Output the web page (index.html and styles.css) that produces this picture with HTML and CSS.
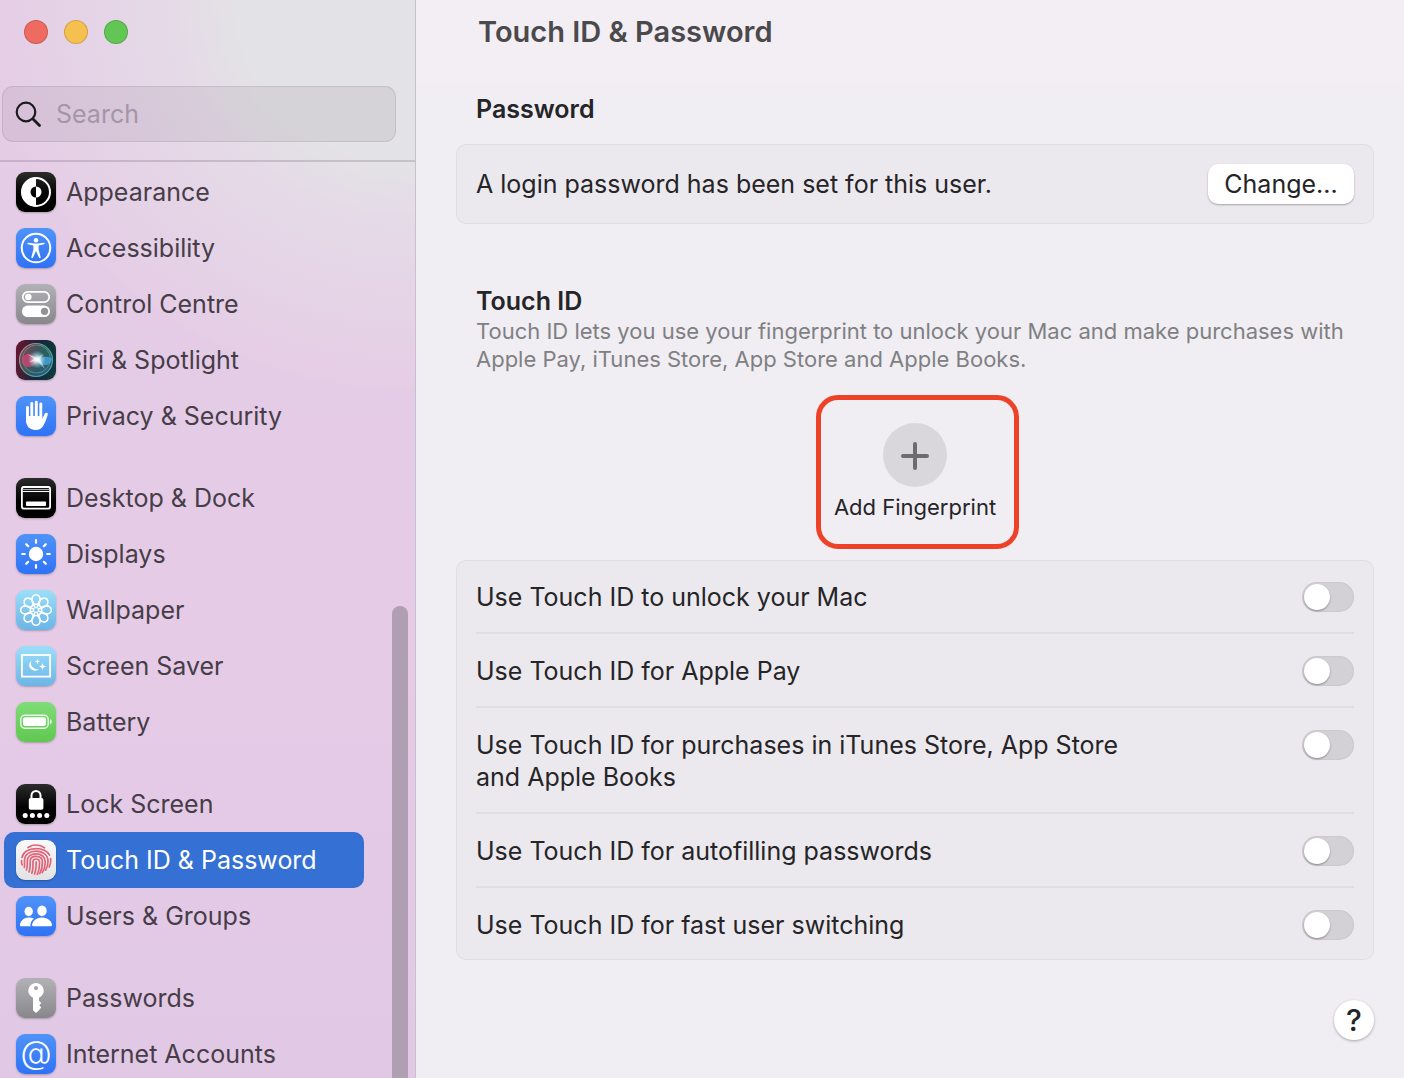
FILE: index.html
```
<!DOCTYPE html>
<html lang="en">
<head>
    <meta charset="UTF-8">
    <meta name="viewport" content="width=device-width, initial-scale=1.0">
    <title>Touch ID &amp; Password</title>
    <link rel="stylesheet" href="styles.css">
</head>
<body>
    <aside class="sidebar">
        <div class="sidebar-top">
            <div class="window-controls">
                <button class="dot red" aria-label="Close"></button>
                <button class="dot yellow" aria-label="Minimise"></button>
                <button class="dot green" aria-label="Zoom"></button>
            </div>
            <label class="search">
                <svg viewBox="0 0 28 28" width="28" height="28" fill="none" stroke="#1d1a1e" stroke-linecap="round">
                    <circle cx="12" cy="12" r="9.300" stroke-width="2.200"/>
                    <path d="M19 19l6.500 6.500" stroke-width="2.800"/>
                </svg>
                <input type="search" placeholder="Search" aria-label="Search">
            </label>
        </div>
        <nav class="list">
            <ul>
                <li><a href="#">
                    <svg class="icon black" viewBox="0 0 40 40">
                        <circle cx="20" cy="20" r="14" fill="none" stroke="#fff" stroke-width="2"/>
                        <path fill="#fff" d="M20 5.500v9a5.500 5.500 0 0 0 0 11v9a14.500 14.500 0 0 1 0-29z"/>
                        <path fill="#fff" d="M20 14.500a5.500 5.500 0 0 1 0 11z"/>
                    </svg>
                    Appearance</a></li>
                <li><a href="#">
                    <svg class="icon blue" viewBox="0 0 40 40">
                        <circle cx="20" cy="20" r="14.300" fill="none" stroke="#fff" stroke-width="2"/>
                        <circle cx="20" cy="12.200" r="2.200" fill="#fff"/>
                        <path fill="#fff" d="M12.200 14.800l6 .8h3.600l6-.8a.7.7 0 0 1 .2 1.400l-5.400 1.300v4l2 7.500a.8.8 0 0 1-1.600.5L20 23l-3 6.500a.8.8 0 0 1-1.600-.5l2-7.500v-4L12 16.200a.7.7 0 0 1 .2-1.400z"/>
                    </svg>
                    Accessibility</a></li>
                <li><a href="#">
                    <svg class="icon grey" viewBox="0 0 40 40">
                        <rect x="6.800" y="7.900" width="26.400" height="10.200" rx="5.100" fill="none" stroke="#fff" stroke-width="1.700"/>
                        <circle cx="12.300" cy="13" r="3.300" fill="#fff"/>
                        <rect x="6" y="21.600" width="28" height="11.500" rx="5.700" fill="#fff"/>
                        <circle cx="28.500" cy="27.300" r="3.600" fill="#929296"/>
                    </svg>
                    Control Centre</a></li>
                <li><a href="#">
                    <svg class="icon siri" viewBox="0 0 40 40">
                        <defs>
                            <radialGradient id="glow">
                                <stop offset="0" stop-color="#fff"/>
                                <stop offset=".3" stop-color="#e8fbff" stop-opacity=".8"/>
                                <stop offset="1" stop-color="#8cdcf0" stop-opacity="0"/>
                            </radialGradient>
                            <linearGradient id="ring" x2="1" y2="1">
                                <stop offset="0" stop-color="#e0728a"/>
                                <stop offset=".5" stop-color="#50a890"/>
                                <stop offset="1" stop-color="#5096dc"/>
                            </linearGradient>
                        </defs>
                        <circle cx="20" cy="20" r="16.500" fill="url(#ring)" fill-opacity=".4" stroke="url(#ring)" stroke-width="1.200"/>
                        <circle cx="20.500" cy="19" r="14" fill="none" stroke="#59b79d" stroke-opacity=".6"/>
                        <path d="M6 20c1-7 8-8 12-4l6 4-6 5c-5 4-12 2-12-5z" fill="#df4178" fill-opacity=".7"/>
                        <path d="M20 20c4-3 13-5 16-1-2 7-7 7-11 5z" fill="#4aa7e8" fill-opacity=".75"/>
                        <circle cx="21" cy="19.500" r="9" fill="url(#glow)"/>
                        <path d="M11 14l10 4 6-4-3 5 5 10-8-8-8 1 5-3z" fill="#fff" fill-opacity=".55"/>
                    </svg>
                    Siri &amp; Spotlight</a></li>
                <li><a href="#">
                    <svg class="icon blue" viewBox="0 0 40 40">
                        <g stroke="#fff" stroke-width="2.900" stroke-linecap="round" fill="none">
                            <path d="M11.500 11.500v14M15.800 7.500v14M20.300 6.200v14M24.800 8v14"/>
                        </g>
                        <path fill="#fff" d="M10 20h16.200v3l2.600-5.400c.7-1.300 3.600-1 3 1-1.300 4.600-2.900 8.700-4.800 11.600-1.500 2.300-3.900 3.800-7.300 3.800-5.700 0-9.700-3.500-9.700-10z"/>
                    </svg>
                    Privacy &amp; Security</a></li>
            </ul>
            <ul>
                <li><a href="#">
                    <svg class="icon black" viewBox="0 0 40 40">
                        <rect x="5.900" y="9" width="28.200" height="21.600" rx="2" fill="none" stroke="#fff" stroke-width="1.800"/>
                        <path stroke="#aaa" stroke-width="1.200" d="M6.500 11.500h27"/>
                        <path stroke="#fff" stroke-width="1.200" d="M6 13.500h28"/>
                        <rect x="10" y="23.500" width="20" height="4.500" rx=".8" fill="#fff"/>
                    </svg>
                    Desktop &amp; Dock</a></li>
                <li><a href="#">
                    <svg class="icon blue" viewBox="0 0 40 40">
                        <circle cx="20" cy="20" r="7.200" fill="#fff"/>
                        <path stroke="#fff" stroke-width="2.200" stroke-linecap="round" d="M20 6.200v2.600M20 31.200v2.600M6.200 20h2.600M31.200 20h2.600M10.200 10.200l2 2M27.800 27.800l2 2M10.200 29.800l2-2M27.800 12.200l2-2"/>
                    </svg>
                    Displays</a></li>
                <li><a href="#">
                    <svg class="icon sky" viewBox="0 0 40 40">
                        <defs>
                            <ellipse id="petal" cx="20" cy="9.600" rx="4.100" ry="4.900"/>
                            <path id="leaf" d="M16.500 12.500L20 20l3.500-7.500"/>
                        </defs>
                        <g fill="none" stroke="#fff" stroke-width="1.600">
                            <use href="#petal"/><use href="#petal" transform="rotate(45 20 20)"/>
                            <use href="#petal" transform="rotate(90 20 20)"/><use href="#petal" transform="rotate(135 20 20)"/>
                            <use href="#petal" transform="rotate(180 20 20)"/><use href="#petal" transform="rotate(225 20 20)"/>
                            <use href="#petal" transform="rotate(270 20 20)"/><use href="#petal" transform="rotate(315 20 20)"/>
                        </g>
                        <g fill="none" stroke="#fff" stroke-width="1.100">
                            <use href="#leaf"/><use href="#leaf" transform="rotate(45 20 20)"/>
                            <use href="#leaf" transform="rotate(90 20 20)"/><use href="#leaf" transform="rotate(135 20 20)"/>
                            <use href="#leaf" transform="rotate(180 20 20)"/><use href="#leaf" transform="rotate(225 20 20)"/>
                            <use href="#leaf" transform="rotate(270 20 20)"/><use href="#leaf" transform="rotate(315 20 20)"/>
                        </g>
                        <circle cx="20" cy="20" r="1.800" fill="#7cc3ea"/>
                    </svg>
                    Wallpaper</a></li>
                <li><a href="#">
                    <svg class="icon sky" viewBox="0 0 40 40">
                        <rect x="5.900" y="9" width="28.200" height="21.600" fill="none" stroke="#fff" stroke-width="1.800"/>
                        <path fill="#fff" d="M15.500 14.500a5.600 5.600 0 1 0 7.500 8.200 6 6 0 0 1-7.500-8.200z"/>
                        <path fill="#fff" d="M21.500 13l.7 1.800 1.800.7-1.800.7-.7 1.800-.7-1.800-1.800-.7 1.800-.7zM26.500 17l.9 2.600 2.600.9-2.600.9-.9 2.600-.9-2.600-2.600-.9 2.600-.9z"/>
                    </svg>
                    Screen Saver</a></li>
                <li><a href="#">
                    <svg class="icon lime" viewBox="0 0 40 40">
                        <rect x="4.800" y="13.200" width="27.400" height="13" rx="4" fill="none" stroke="#fff" stroke-opacity=".85" stroke-width="1.400"/>
                        <rect x="7" y="15.300" width="23" height="8.800" rx="2.300" fill="#fff"/>
                        <path fill="#fff" fill-opacity=".85" d="M34 17.200c2.400.6 2.400 4.400 0 5z"/>
                    </svg>
                    Battery</a></li>
            </ul>
            <ul>
                <li><a href="#">
                    <svg class="icon black" viewBox="0 0 40 40">
                        <path fill="none" stroke="#fff" stroke-width="2" d="M15.500 15v-3.500a4.500 4.500 0 0 1 9 0V15"/>
                        <rect x="12.800" y="14" width="14.600" height="11.700" rx="1.800" fill="#fff"/>
                        <g fill="#fff"><circle cx="9.200" cy="31.600" r="2.500"/><circle cx="16.400" cy="31.600" r="2.500"/><circle cx="23.600" cy="31.600" r="2.500"/><circle cx="30.800" cy="31.600" r="2.500"/></g>
                    </svg>
                    Lock Screen</a></li>
                <li><a href="#" class="active" aria-current="page">
                    <svg class="icon white" viewBox="0 0 40 40">
                        <g fill="none" stroke="#e2647a" stroke-width="1.700" stroke-linecap="round">
                            <path d="M12 7.500a15 15 0 0 1 16.500.3"/>
                            <path d="M6 17.500C7 12 12.500 8.600 20 8.600c6 0 11 2.200 13.500 6.400"/>
                            <path d="M5.500 20.500c0 2 .2 3 .7 4.500M34.700 18.500c.3 3.200-.2 6-1.500 8.500"/>
                            <path d="M8.300 27.500c.6-2 .2-4.500.2-7C8.500 14.500 13.500 11.200 20 11.200c7 0 12 4 12 10 0 3.600-.8 6.500-2.500 9"/>
                            <path d="M10.500 30c1.200-2.800.8-6 .8-9 0-4.500 3.700-7.200 8.700-7.200 5.500 0 9.200 3.200 9.200 8 0 4-1 7.800-3 10.700"/>
                            <path d="M13 31.800c1.500-3 1.200-7.300 1.200-10.800 0-3 2.400-4.600 5.800-4.600 4 0 6.400 2.300 6.400 5.600 0 4.500-.9 8.400-2.700 11.600"/>
                            <path d="M15.800 33.200c1.500-3.500 1.200-8.200 1.200-11.600 0-1.800 1.300-2.600 3-2.600 2.200 0 3.600 1.300 3.600 3.400 0 4.500-.7 8.400-2.300 12"/>
                            <path d="M18.500 34c1.700-4 1.700-8.500 1.700-12.200"/>
                        </g>
                    </svg>
                    Touch ID &amp; Password</a></li>
                <li><a href="#">
                    <svg class="icon blue" viewBox="0 0 40 40">
                        <g fill="#fff">
                            <ellipse cx="12.700" cy="15.500" rx="4.200" ry="4.700"/>
                            <path d="M18 22.500c-2.500 2-3.600 4.500-3.600 6.500 0 .7.200 1 .4 1.200H5c-.8 0-1-.4-1-1 0-3.600 3.400-7.700 8.700-7.700 2 0 3.800.4 5.300 1z"/>
                            <ellipse cx="26" cy="14.800" rx="4.700" ry="5.300"/>
                            <path d="M26 21.500c6 0 10 4.200 10 7.600 0 .8-.4 1.200-1.200 1.200H17.300c-.8 0-1.200-.4-1.200-1.200 0-3.400 4-7.600 9.900-7.600z"/>
                        </g>
                    </svg>
                    Users &amp; Groups</a></li>
            </ul>
            <ul>
                <li><a href="#">
                    <svg class="icon grey" viewBox="0 0 40 40">
                        <path fill="#fff" fill-rule="evenodd" d="M20 5a7.700 7.700 0 0 1 3 14.800v3l2.300 2.200-2 2.300 2 2.300-2 2.200V32L20 35l-3-2.800V19.800A7.700 7.700 0 0 1 20 5zm0 3a2.100 2.100 0 1 0 0 4.200A2.100 2.100 0 0 0 20 8z"/>
                    </svg>
                    Passwords</a></li>
                <li><a href="#">
                    <svg class="icon blue" viewBox="0 0 40 40">
                        <text class="at" x="20" y="30" text-anchor="middle">@</text>
                    </svg>
                    Internet Accounts</a></li>
            </ul>
        </nav>
        <div class="scrollbar"></div>
    </aside>

    <main class="main">
        <header class="titlebar">
            <h1>Touch ID &amp; Password</h1>
        </header>
        <div class="content">
            <section class="password">
                <h2>Password</h2>
                <div class="card password-card">
                    <span>A login password has been set for this user.</span>
                    <button class="change">Change...</button>
                </div>
            </section>
            <section class="touch-id">
                <div class="intro">
                    <h2>Touch ID</h2>
                    <p>Touch ID lets you use your fingerprint to unlock your Mac and make purchases with Apple Pay, iTunes Store, App Store and Apple Books.</p>
                </div>
                <button class="add">
                    <span class="add-circle">
                        <svg viewBox="0 0 64 64" width="64" height="64" stroke="#6c6c6f" stroke-width="4" stroke-linecap="round">
                            <path d="M20 33h24M32 21v24"/>
                        </svg>
                    </span>
                    Add Fingerprint
                </button>
                <div class="card">
                    <label class="row"><span>Use Touch ID to unlock your Mac</span><input type="checkbox" role="switch"></label>
                    <label class="row"><span>Use Touch ID for Apple Pay</span><input type="checkbox" role="switch"></label>
                    <label class="row"><span>Use Touch ID for purchases in iTunes Store, App Store and Apple Books</span><input type="checkbox" role="switch"></label>
                    <label class="row"><span>Use Touch ID for autofilling passwords</span><input type="checkbox" role="switch"></label>
                    <label class="row"><span>Use Touch ID for fast user switching</span><input type="checkbox" role="switch"></label>
                </div>
            </section>
            <button class="help" aria-label="Help">?</button>
        </div>
    </main>
</body>
</html>
```
FILE: styles.css
```
* {
    box-sizing: border-box;
}
body {
    margin: 0;
    display: flex;
    height: 100vh;
    overflow: hidden;
    font-family: Inter, "Liberation Sans", sans-serif;
    font-size: 25px;
    line-height: 32px;
    color: #252427;
    background-color: #f0eef3;
}
h1, h2, p, ul {
    margin: 0;
    padding: 0;
}
button {
    font: inherit;
    color: inherit;
    border: 0;
    padding: 0;
}

/* Sidebar */
.sidebar {
    position: relative;
    flex: 0 0 416px;
    display: flex;
    flex-direction: column;
    overflow: hidden;
    border-right: 1px solid #c9c0cb;
    background: radial-gradient(ellipse 425px 390px at 100% 0, #e3e2e6 42%, #e5dae7 58%, #e5cde6 100%, rgba(229, 205, 230, 0) 100%),
        linear-gradient(#e5cde6, #e5cbe6 60%, #e1c8e5);
}
.sidebar-top {
    padding: 20px 19px 18px 2px;
    border-bottom: 2px solid rgba(80, 60, 85, 0.2);
}
.window-controls {
    display: flex;
    gap: 16px;
    padding-left: 22px;
    margin-bottom: 42px;
}
.dot {
    width: 24px;
    height: 24px;
    border-radius: 50%;
    border: 1px solid rgba(0, 0, 0, 0.15);
}
.red {
    background-color: #ed6b60;
}
.yellow {
    background-color: #f5c04f;
}
.green {
    background-color: #62c655;
}
.search {
    display: flex;
    align-items: center;
    gap: 14px;
    height: 56px;
    padding: 0 11px;
    border: 1px solid rgba(80, 60, 85, 0.12);
    border-radius: 11px;
    background-color: rgba(80, 70, 80, 0.09);
}
.search input {
    flex: 1;
    min-width: 0;
    padding: 0;
    border: 0;
    outline: 0;
    background: none;
    font: inherit;
    color: #252427;
}
.search input::placeholder {
    color: #a595a8;
    opacity: 1;
}
.list {
    display: flex;
    flex-direction: column;
    gap: 26px;
    padding: 2px 51px 0 4px;
}
.list ul {
    list-style: none;
}
.list a {
    display: flex;
    align-items: center;
    gap: 10px;
    height: 56px;
    padding: 0 12px;
    border-radius: 10px;
    color: #463d48;
    text-decoration: none;
    white-space: nowrap;
}
.list .active {
    background-color: #3570d4;
    color: #fff;
}
.icon {
    flex: none;
    width: 40px;
    height: 40px;
    border-radius: 9px;
    box-shadow: 0 1px 2px rgba(0, 0, 0, 0.25);
}
.black {
    background: linear-gradient(#2c2c2c, #000 60%);
}
.blue {
    background: linear-gradient(#4f93f8, #2f72f6);
}
.grey {
    background: linear-gradient(#b2b2b6, #88888c);
}
.siri {
    background: linear-gradient(100deg, #6a1530, #14283c 55%, #0e3c3a);
}
.sky {
    background: linear-gradient(#9bdff8, #6cb4e6);
}
.lime {
    background: linear-gradient(#80dc78, #60c850);
}
.white {
    background: linear-gradient(#fafafa, #e2e2e2);
}
.at {
    fill: #fff;
    font-size: 32px;
    font-weight: 300;
}
.scrollbar {
    position: absolute;
    top: 606px;
    right: 7px;
    bottom: -10px;
    width: 16px;
    border-radius: 8px;
    background-color: #b09eb3;
}

/* Main pane */
.main {
    flex: 1;
    min-width: 0;
}
.titlebar {
    height: 84px;
    padding: 12px 62px;
    background-color: #f3eef3;
}
h1 {
    font-size: 29px;
    line-height: 40px;
    font-weight: 600;
    color: #4a494c;
}
.content {
    display: flex;
    flex-direction: column;
    padding: 9px 30px 0 40px;
}
h2 {
    font-size: 25px;
    line-height: 32px;
    font-weight: 600;
}
.password h2 {
    padding: 0 20px;
    margin-bottom: 19px;
}
.card {
    padding: 0 20px;
    border-radius: 10px;
    background-color: #ebe9ee;
    box-shadow: inset 0 0 0 1px #e0dee3;
}
.password-card {
    display: flex;
    align-items: center;
    justify-content: space-between;
    height: 80px;
    margin-bottom: 61px;
}
.change {
    width: 146px;
    height: 40px;
    border-radius: 10px;
    background-color: #fff;
    box-shadow: 0 1px 2px rgba(0, 0, 0, 0.3);
}
.touch-id {
    display: flex;
    flex-direction: column;
}
.intro {
    padding: 0 0 0 20px;
}
.intro p {
    font-size: 22px;
    line-height: 28px;
    color: #808083;
}
.add {
    position: relative;
    align-self: center;
    display: flex;
    flex-direction: column;
    align-items: center;
    gap: 6px;
    width: 200px;
    height: 154px;
    padding-top: 28px;
    margin: 22px 0 11px;
    font-size: 22px;
    line-height: 28px;
    background: none;
}
/* red ring around the add button */
.add::after {
    content: "";
    position: absolute;
    inset: 0 -4px 0 1px;
    border: 5px solid #ee4228;
    border-radius: 22px;
}
.add-circle {
    height: 64px;
    border-radius: 50%;
    background-color: #d9d7dc;
}
.row {
    display: flex;
    justify-content: space-between;
    padding: 21px 0 19px;
    border-bottom: 2px solid #e0dee3;
}
.row:last-child {
    border-bottom: 0;
}
.row span {
    max-width: 680px;
}
.row input {
    appearance: none;
    flex: none;
    width: 52px;
    height: 30px;
    margin: 1px 0;
    padding: 2px;
    border-radius: 15px;
    background-color: #d3d1d6;
    box-shadow: inset 0 0 2px rgba(0, 0, 0, 0.12);
}
.row input::before {
    content: "";
    display: block;
    width: 26px;
    height: 26px;
    border-radius: 50%;
    background-color: #fff;
    box-shadow: 0 1px 2px rgba(0, 0, 0, 0.35);
}
.row input:checked {
    background-color: #3570d4;
}
.row input:checked::before {
    margin-left: 22px;
}
.help {
    align-self: flex-end;
    width: 40px;
    height: 40px;
    margin-top: 40px;
    border-radius: 50%;
    background-color: #fff;
    font-size: 30px;
    font-weight: 500;
    box-shadow: 0 1px 3px rgba(0, 0, 0, 0.3);
}
```
